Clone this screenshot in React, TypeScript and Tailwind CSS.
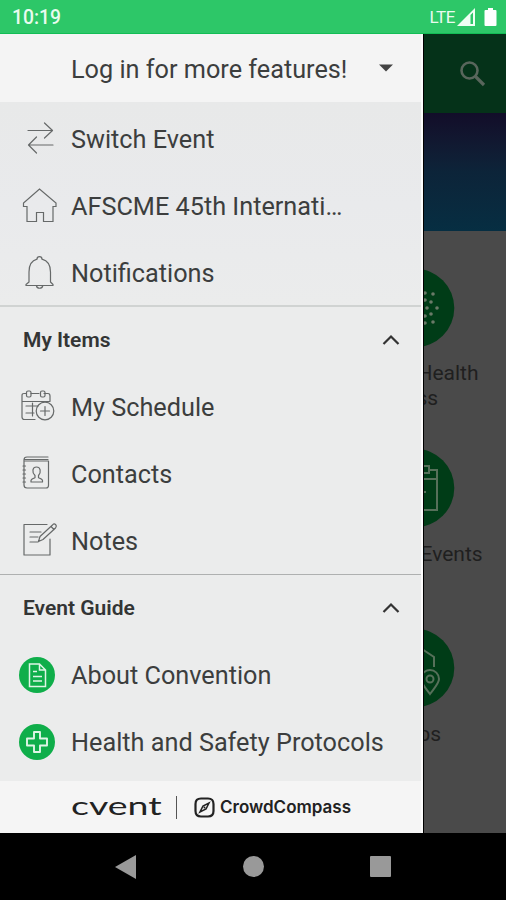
import type { ReactNode } from "react";

const stroke = {
  fill: "none",
  stroke: "#666969",
  strokeWidth: 1.2,
  strokeLinejoin: "round" as const,
  strokeLinecap: "round" as const,
};

function SwitchIcon() {
  return (
    <svg width="36" height="36" viewBox="0 0 36 36" {...stroke}>
      <path d="M7 10.5H31M23.5 3L31.5 10.5L23.5 18M32 25H8M15.5 17L7.5 25L15.5 33" />
    </svg>
  );
}

function HomeIcon() {
  return (
    <svg width="36" height="36" viewBox="0 0 36 36" {...stroke} strokeLinejoin="miter">
      <path d="M6 34.5V19.5H2.500V16L18.5 2L35 16V19.5H32V34.5H22.5V25.5H15.5V34.5Z" />
    </svg>
  );
}

function BellIcon() {
  return (
    <svg width="36" height="36" viewBox="0 0 36 36" {...stroke}>
      <path d="M8 28V18C8 10.5 11 6.500 16 5.200C16 1.800 21 1.800 21 5.200C26 6.500 29.500 10.500 29.500 18V28L32 30.500V31.500H5V30.500Z" />
      <path d="M15.500 32C16.200 35 21 35 21.700 32" />
    </svg>
  );
}

function ScheduleIcon() {
  return (
    <svg width="36" height="36" viewBox="0 1 36 36" {...stroke}>
      <path d="M7 5.500H5Q3 5.500 3 7.500V29Q3 31.500 5.500 31.500H16M12 5.500H20M25 5.500H29Q31 5.500 31 8V13M3 13.500H31M7 18H19M7 25H15M13.500 15V28" />
      <rect x="7.500" y="3" width="4.500" height="6" rx="1.500" />
      <rect x="21.500" y="3" width="4.500" height="6" rx="1.500" />
      <circle cx="26" cy="23" r="8.800" />
      <path d="M21.500 23H30.500M26 18.500V27.500" />
    </svg>
  );
}

function ContactsIcon() {
  return (
    <svg width="36" height="36" viewBox="0 1 36 36" {...stroke}>
      <path d="M29 2H8Q5 2 5 5V30Q5 33 8 33H27Q29.500 33 29.500 30.500V6H6M6 4.500H29" />
      <path d="M12 27V25.500Q12 24 16 22.700V20.500C12.500 17 13.500 12 17.500 12S22.500 17 19.500 20.500V22.700Q23.500 24 23.500 25.500V27Z" />
      <path d="M4 11H6.500M4 15H6.500M4 19H6.500M4 23H6.500M4 27H6.500" />
    </svg>
  );
}

function NotesIcon() {
  return (
    <svg width="36" height="36" viewBox="0 2 36 36" {...stroke}>
      <path d="M26 3.500H3V34H29V18M9 11H20M9 16H17M9 21H17" />
      <path d="M17.500 20.500L19 15.500L31.500 4Q33 2 34.500 3.500T34.500 7L22 18.500ZM30 5.500L33 8.500" />
    </svg>
  );
}

function DocIcon() {
  return (
    <svg width="36" height="36" viewBox="0 0 36 36">
      <circle cx="18" cy="18" r="18" fill="#0fae4a" />
      <path d="M10.500 7H20.500L26.500 13V29.500H10.500ZM20.500 7V13H26.500M14 14.500H18M14 19.500H23M14 24H23" fill="none" stroke="#dff5e6" strokeWidth="1.500" />
    </svg>
  );
}

function CrossIcon() {
  return (
    <svg width="36" height="36" viewBox="0 0 36 36">
      <circle cx="18" cy="18" r="18" fill="#0fae4a" />
      <path d="M15 8H21V14.500H28V21.500H21V28H15V21.500H8V14.500H15Z" fill="none" stroke="#dff5e6" strokeWidth="1.900" strokeLinejoin="round" />
    </svg>
  );
}

function Row({ icon, children, round = false, low = false }: { icon: ReactNode; children: ReactNode; round?: boolean; low?: boolean }) {
  return (
    <div className="flex h-[67px] items-center">
      <div className={round ? "ml-[19px] w-[52px] shrink-0" : "ml-[21px] w-[50px] shrink-0"}>{icon}</div>
      <span className={`${low ? "pt-[5px]" : "pt-[3px]"} whitespace-nowrap text-[25.25px] leading-8 text-[#3c3e3e]`}>{children}</span>
    </div>
  );
}

function Section({ title }: { title: string }) {
  return (
    <div className="flex h-[66px] items-center justify-between pl-[23px] pr-[21px]">
      <h2 className="text-[21px] font-semibold leading-7 text-[#333535]">{title}</h2>
      <svg width="18" height="12" viewBox="0 0 18 12" fill="none" stroke="#333" strokeWidth="2.200">
        <path d="M1.500 10L9 2.500L16.500 10" />
      </svg>
    </div>
  );
}

function Tile({ lines, children }: { lines: string[]; children: ReactNode }) {
  return (
    <div className="-ml-[89px] flex h-[180px] w-[160px] flex-col items-center">
      <svg className="shrink-0" width="80" height="80" viewBox="0 0 80 80" fill="none" stroke="#56705a" strokeWidth="2">
        <circle cx="40" cy="40" r="39.300" fill="#003c17" stroke="none" />
        {children}
      </svg>
      <div className={`${lines.length > 1 ? "mt-[13px]" : "mt-[14px]"} text-center text-[21px] leading-[25px] text-[#1f1f1f]`}>
        {lines.map((line) => (
          <div key={line} className="whitespace-nowrap">{line}</div>
        ))}
      </div>
    </div>
  );
}

const dots = [
  [50, 25], [58, 26], [50, 32], [56, 34], [52, 40], [62, 40], [56, 46], [50, 48], [58, 54], [50, 55],
];

export default function App() {
  return (
    <div className="flex h-[900px] w-[506px] flex-col overflow-hidden bg-black font-['Roboto',sans-serif]">
      <header className="flex h-[34px] shrink-0 items-center justify-between border-b border-[#12bd55] bg-[#2dc768] pl-3 pr-[9px] text-[#e9fbef]">
        <span className="pt-[3px] text-[19.300px] font-medium leading-6">10:19</span>
        <div className="flex items-center pt-px">
          <span className="text-[17px] leading-5 tracking-[-0.4px]">LTE</span>
          <svg className="ml-[2px]" width="20" height="20" viewBox="0 0 20 20">
            <path d="M0 19L18 1V19Z" fill="#effff4" />
            <path d="M13.500 8V17H16V5.500Z" fill="#2dc768" />
          </svg>
          <svg className="ml-[7px]" width="13" height="20" viewBox="0 0 13 20">
            <path d="M4 1H9V3H11.500Q12.500 3 12.500 4V18Q12.500 19 11.500 19H1.500Q.5 19 .5 18V4Q.5 3 1.500 3H4Z" fill="#fff" />
          </svg>
        </div>
      </header>

      <main className="flex h-[799px] shrink-0">
        <aside className="flex w-[423px] shrink-0 flex-col border-r-2 border-[#fcfcfc] bg-[#ebecec]">
          <div className="flex h-[68px] shrink-0 items-center bg-[#f4f4f4] pl-[71px]">
            <span className="whitespace-nowrap pt-[3px] text-[25.25px] leading-8 text-[#3c3e3e]">Log in for more features!</span>
            <svg className="ml-auto mr-[28px]" width="14" height="8" viewBox="0 0 14 8">
              <path d="M0 .5H14L7 7.500Z" fill="#444" />
            </svg>
          </div>
          <nav className="flex grow flex-col">
            <div className="bg-linear-to-b from-[#e8e9e9] via-[#e9eaec] to-[#ebecec] pt-[2px]">
              <Row icon={<SwitchIcon />} low>Switch Event</Row>
              <Row icon={<HomeIcon />} low>AFSCME 45th Internati…</Row>
              <Row icon={<BellIcon />} low>Notifications</Row>
            </div>
            <div className="border-t-2 border-[#d0d3d2]">
              <Section title="My Items" />
              <Row icon={<ScheduleIcon />} round>My Schedule</Row>
              <Row icon={<ContactsIcon />} round>Contacts</Row>
              <Row icon={<NotesIcon />}>Notes</Row>
            </div>
            <div className="border-t border-[#aeb0b0]">
              <Section title="Event Guide" />
              <Row icon={<DocIcon />} round>About Convention</Row>
              <Row icon={<CrossIcon />} round>Health and Safety Protocols</Row>
            </div>
          </nav>
          <footer className="flex h-[52px] shrink-0 items-center bg-[#f5f5f5] pl-[71px] text-[#222]">
            <span className="w-[91px] shrink-0 font-['Lato',sans-serif]">
              <span className="inline-block origin-left scale-x-[1.500] text-[25px] leading-6">cvent</span>
            </span>
            <span className="ml-[14px] h-[23px] w-px bg-[#555]" />
            <svg className="ml-[17px] shrink-0" width="21" height="21" viewBox="0 0 21 21" fill="none" stroke="#222" strokeWidth="2.200">
              <path d="M7 1.500H14Q19.500 1.500 19.500 7V14Q19.500 19.500 14 19.500H7Q1.500 19.500 1.500 14V7Q1.500 1.500 7 1.500Z" />
              <path d="M15 6L12 12L6 15L9 9Z" strokeWidth="1.600" />
              <circle cx="10.500" cy="10.500" r="1" fill="#222" stroke="none" />
            </svg>
            <span className="ml-[5px] whitespace-nowrap font-['Inter',sans-serif] text-[17px] font-semibold leading-6">CrowdCompass</span>
          </footer>
        </aside>

        <section className="flex grow flex-col overflow-hidden border-l border-black bg-[#4a4a4a]">
          <div className="flex h-[79px] shrink-0 items-center bg-[#053219] pl-[35px]">
            <svg width="28" height="28" viewBox="0 0 28 28" fill="none" stroke="#59665c" strokeWidth="2.600">
              <circle cx="10.500" cy="10.500" r="8" />
              <path d="M16.500 16.500L25 25" strokeWidth="3.200" />
            </svg>
          </div>
          <div className="h-[118px] shrink-0 bg-linear-to-b from-[#120d29] via-[#0c2439] to-[#062e42]" />
          <div className="flex flex-col pt-[37px]">
            <Tile lines={["COVID Health", "Pass"]}>
              {dots.map(([x, y]) => (
                <circle key={`${x}-${y}`} cx={x} cy={y} r="1.800" fill="#6a7a68" stroke="none" />
              ))}
            </Tile>
            <Tile lines={["Special Events"]}>
              <path d="M24 22H32M54 22H62V62H24V22M24 31H62M47 18H54V25H47ZM49 44H51" />
            </Tile>
            <Tile lines={["Maps"]}>
              <path d="M24 39V29L41 17L59 29V39M55 66C49 58 46 55 46 51A9 9 0 0 1 64 51C64 55 61 58 55 66Z" />
              <circle cx="55" cy="51" r="3.500" />
            </Tile>
          </div>
        </section>
      </main>

      <footer className="flex grow items-center bg-black pl-[115px]">
        <svg width="21" height="24" viewBox="0 0 21 24"><path d="M0 12L21 0V24Z" fill="#999" /></svg>
        <span className="ml-[107px] size-[21px] rounded-full bg-[#999]" />
        <span className="ml-[106px] size-[21px] rounded-[1px] bg-[#999]" />
      </footer>
    </div>
  );
}
